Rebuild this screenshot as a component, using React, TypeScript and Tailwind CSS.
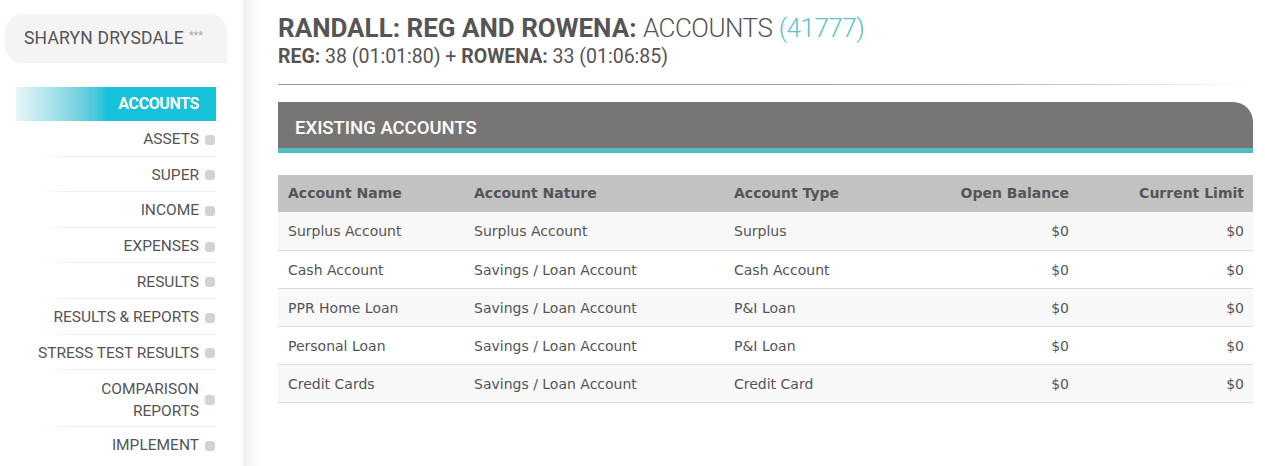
import React from "react";

const navItems = [
  "ASSETS",
  "SUPER",
  "INCOME",
  "EXPENSES",
  "RESULTS",
  "RESULTS & REPORTS",
  "STRESS TEST RESULTS",
  "COMPARISON REPORTS",
  "IMPLEMENT",
];

const accounts = [
  { name: "Surplus Account", nature: "Surplus Account", type: "Surplus", open: "$0", limit: "$0" },
  { name: "Cash Account", nature: "Savings / Loan Account", type: "Cash Account", open: "$0", limit: "$0" },
  { name: "PPR Home Loan", nature: "Savings / Loan Account", type: "P&I Loan", open: "$0", limit: "$0" },
  { name: "Personal Loan", nature: "Savings / Loan Account", type: "P&I Loan", open: "$0", limit: "$0" },
  { name: "Credit Cards", nature: "Savings / Loan Account", type: "Credit Card", open: "$0", limit: "$0" },
];

const headFont = "font-['Roboto','Liberation_Sans',sans-serif]";
const tableFont = "font-['DejaVu_Sans','Liberation_Sans',sans-serif]";

function Sidebar() {
  return (
    <div className={`w-[243px] shrink-0 pt-[14px] ${headFont}`}>
      <div className="ml-[5px] w-[222px] h-[49px] bg-[#f4f4f4] rounded-tl-[18px] rounded-tr-[18px] rounded-bl-[18px] flex items-center pl-[19px]">
        <span className="text-[17.5px] text-[#555] tracking-[0.2px]">SHARYN DRYSDALE</span>
        <span className="ml-[5px] text-[11px] text-[#aaa] -mt-[4px]">***</span>
      </div>

      <div className="ml-4 w-[200px] mt-[24px]">
        <div className="h-[34px] flex items-center justify-end pr-[17px] bg-gradient-to-r from-[#e6f6f8] via-[#17c1d8] via-45% to-[#17c1d8]">
          <span className="text-white font-bold text-[16px] tracking-[-0.4px]">ACCOUNTS</span>
        </div>
        {navItems.map((item) => {
          const tall = item === "COMPARISON REPORTS";
          return (
            <div key={item}>
              <div
                className={`flex items-center justify-end pt-[3px] ${tall ? "h-[56px]" : "h-[34.6px]"}`}
              >
                <span
                  className={`text-[15.5px] text-[#555] text-right ${tall ? "w-[110px] leading-[22px]" : ""}`}
                >
                  {item}
                </span>
                <span className="ml-[6px] mr-px w-[10px] h-[10px] rounded-[3px] bg-[#d3d3d3]" />
              </div>
              {item !== "IMPLEMENT" && (
                <div className="ml-6 h-px bg-gradient-to-r from-white via-[#ececec] via-20% to-[#ececec]" />
              )}
            </div>
          );
        })}
      </div>
    </div>
  );
}

function AccountsTable() {
  return (
    <table className={`w-full mt-[22px] border-collapse text-[14px] ${tableFont}`}>
      <thead>
        <tr className="bg-[#c2c2c2] h-[37px] text-[#555]">
          <th className="w-[186px] text-left font-bold px-[10px]">Account Name</th>
          <th className="w-[260px] text-left font-bold px-[10px]">Account Nature</th>
          <th className="w-[185px] text-left font-bold px-[10px]">Account Type</th>
          <th className="w-[170px] text-right font-bold px-[10px]">Open Balance</th>
          <th className="text-right font-bold px-[9px]">Current Limit</th>
        </tr>
      </thead>
      <tbody>
        {accounts.map((a, i) => (
          <tr
            key={a.name}
            className={`h-[38px] border-b border-[#dcdcdc] text-[#555] ${i % 2 === 0 ? "bg-[#f8f8f8]" : "bg-white"}`}
          >
            <td className="px-[10px] pt-[2px]">{a.name}</td>
            <td className="px-[10px] pt-[2px]">{a.nature}</td>
            <td className="px-[10px] pt-[2px]">{a.type}</td>
            <td className="px-[10px] pt-[2px] text-right">{a.open}</td>
            <td className="px-[9px] pt-[2px] text-right">{a.limit}</td>
          </tr>
        ))}
      </tbody>
    </table>
  );
}

export default function App() {
  return (
    <div className="flex w-[1265px] h-[466px] bg-white overflow-hidden">
      <Sidebar />
      <div className="w-[19px] shrink-0 bg-gradient-to-r from-[#f1f1f1] to-white" />
      <div className="flex-1 pl-4 pr-3">
        <div className={`pt-[13px] text-[#555] ${headFont}`}>
          <h1 className="text-[26px] leading-[30px]">
            <span className="font-bold">RANDALL: REG AND ROWENA:</span>{" "}
            <span className="font-light tracking-[-0.5px]">ACCOUNTS</span>{" "}
            <span className="font-light tracking-[-0.5px] text-[#5bc3cb]">(41777)</span>
          </h1>
          <div className="text-[19.5px] leading-[26px] mt-[1px]">
            <span className="font-bold">REG:</span> 38 (01:01:80) +{" "}
            <span className="font-bold">ROWENA:</span> 33 (01:06:85)
          </div>
          <div className="mt-[14px] h-px bg-gradient-to-r from-[#999] via-[#aaa] via-70% to-white" />
        </div>

        <div className="mt-[17px]">
          <div className={`h-[46px] bg-[#787674] rounded-tr-[20px] flex items-center pl-[17px] pt-[8px] ${headFont}`}>
            <span className="text-white text-[18.5px] font-medium">EXISTING ACCOUNTS</span>
          </div>
          <div className="h-[5px] bg-[#4fbcc4]" />
        </div>

        <AccountsTable />
      </div>
    </div>
  );
}
